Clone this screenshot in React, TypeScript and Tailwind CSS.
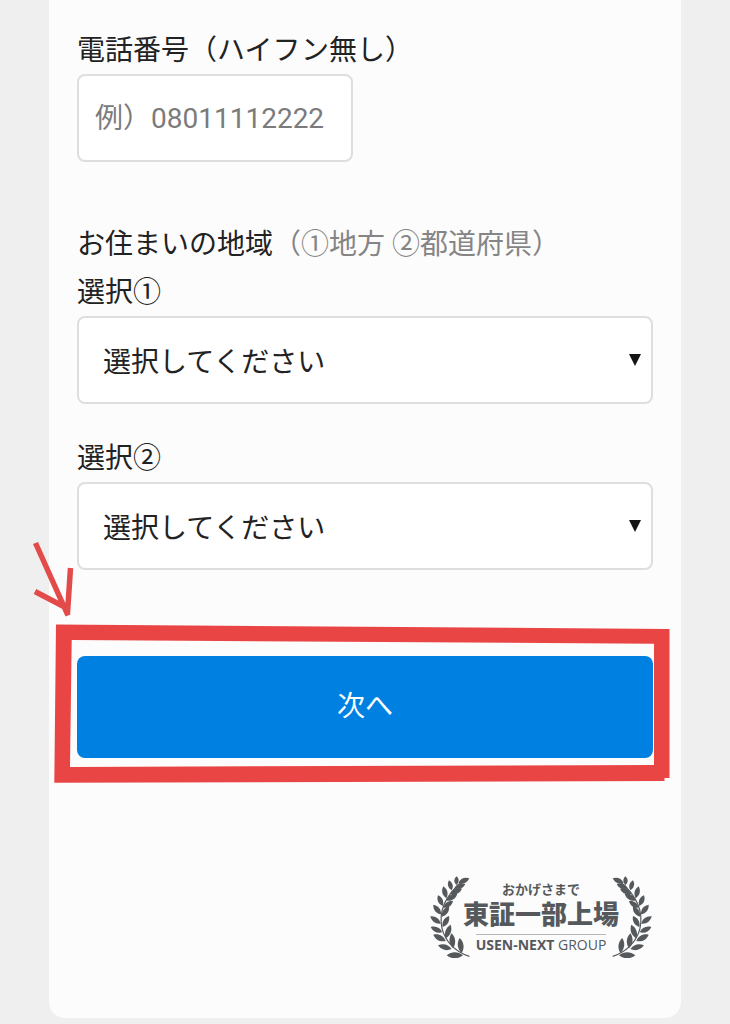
import React from "react";

type Leaf = [baseX: number, baseY: number, tipX: number, tipY: number];

const LEAVES: Leaf[] = [
  [132, 269, 83, 269],
  [98, 250, 57, 239],
  [80, 226, 43, 207],
  [70, 200, 35, 184],
  [65, 174, 34, 152],
  [66, 146, 43, 117],
  [71, 121, 57, 89],
  [82, 98, 73, 62],
  [98, 74, 90, 44],
  [112, 58, 113, 32],
  [118, 52, 151, 38],
  [128, 262, 122, 217],
  [102, 248, 98, 203],
  [80, 218, 95, 177],
  [71, 184, 90, 151],
  [69, 153, 90, 122],
  [73, 126, 102, 106],
  [82, 105, 115, 84],
  [94, 84, 129, 69],
  [106, 68, 139, 55],
];

function leafPath([bx, by, tx, ty]: Leaf) {
  const dx = tx - bx;
  const dy = ty - by;
  const len = Math.hypot(dx, dy);
  const w = 5 + len * 0.14;
  const nx = (-dy / len) * w;
  const ny = (dx / len) * w;
  const point = (t: number, side: number) =>
    `${(bx + dx * t + nx * side).toFixed(1)} ${(by + dy * t + ny * side).toFixed(1)}`;
  return `M${bx} ${by}C${point(0.3, 1)} ${point(0.7, 1)} ${tx} ${ty}C${point(0.7, -1)} ${point(0.3, -1)} ${bx} ${by}Z`;
}

function Laurel({ className = "" }: { className?: string }) {
  return (
    <svg
      viewBox="30 31 126 246"
      className={`h-[82px] w-[42px] shrink-0 fill-[#55595c] ${className}`}
      aria-hidden="true"
    >
      <path
        d="M151 272C106 258 78 224 69 188C60 145 73 95 128 49"
        fill="none"
        stroke="#55595c"
        strokeWidth="3.5"
      />
      {LEAVES.map((leaf) => (
        <path key={leaf.join("-")} d={leafPath(leaf)} />
      ))}
    </svg>
  );
}

function RegionSelect({ id, label }: { id: string; label: string }) {
  return (
    <div>
      <label htmlFor={id} className="block">
        {label}
      </label>
      <div className="relative">
        <select
          id={id}
          className="block h-[88px] w-full appearance-none rounded-lg border-2 border-[#dedede] bg-white px-6 pt-1.5"
        >
          <option>選択してください</option>
        </select>
        <svg
          viewBox="0 0 12 12"
          className="pointer-events-none absolute top-1/2 right-3 size-3 -translate-y-1/2 fill-[#151515]"
          aria-hidden="true"
        >
          <path d="M0 0H12L6 12Z" />
        </svg>
      </div>
    </div>
  );
}

function Highlight() {
  return (
    <svg
      viewBox="31 540 640 244"
      preserveAspectRatio="none"
      className="pointer-events-none absolute -top-[116px] -left-[46px] h-[244px] w-[calc(100%+64px)]"
      aria-hidden="true"
    >
      <path
        fill="#ea4545"
        fillRule="evenodd"
        d="M56 624.5L669.5 629V778H664.5V781L54.3 782.7ZM71.7 640L70 767L654 765V643.7Z"
      />
      <path
        d="M35.5 543L68 615.5M35 591.5L67.500 608.500M70.500 568L67.500 613"
        fill="none"
        stroke="#e34b4b"
        strokeWidth="5.5"
      />
    </svg>
  );
}

function ListingBadge() {
  return (
    <div className="flex justify-end text-[#55595c]">
      <Laurel />
      <div className="-mx-2 flex flex-col items-center pt-1">
        <p className="text-[13px] leading-5 font-bold">おかげさまで</p>
        <p className="text-[26px] leading-[30px] font-black">東証一部上場</p>
        <p className="mt-1 border-t border-[#b5b7b8] pt-0.5 font-['Open_Sans','Noto_Sans',sans-serif] text-[14px] leading-4">
          <b className="font-bold">USEN-NEXT</b> GROUP
        </p>
      </div>
      <Laurel className="-scale-x-100" />
    </div>
  );
}

export default function App() {
  return (
    <div className="min-h-screen bg-[#efefef] px-[49px] pb-1.5 font-[Roboto,'Noto_Sans_CJK_JP',sans-serif] text-[28px] leading-[46px] text-[#222]">
      <form
        className="rounded-b-2xl bg-[#fcfcfc] px-7 pt-7 pb-[60px]"
        onSubmit={(event) => event.preventDefault()}
      >
        <label htmlFor="phone" className="block">
          電話番号（ハイフン無し）
        </label>
        <input
          id="phone"
          type="tel"
          placeholder="例）08011112222"
          className="block h-[88px] w-[276px] rounded-lg border-2 border-[#dedede] bg-white px-4 placeholder:text-[#7b7b7b]"
        />

        <fieldset className="mt-15 flex flex-col gap-8">
          <legend className="pb-0.5">
            お住まいの地域<span className="text-[#858585]">（①地方 ②都道府県）</span>
          </legend>
          <RegionSelect id="region" label="選択①" />
          <RegionSelect id="prefecture" label="選択②" />
        </fieldset>

        <div className="relative mt-[86px] mb-[118px]">
          <button
            type="submit"
            className="block h-[102px] w-full rounded-lg bg-[#0080e0] text-white"
          >
            次へ
          </button>
          <Highlight />
        </div>

        <ListingBadge />
      </form>
    </div>
  );
}
